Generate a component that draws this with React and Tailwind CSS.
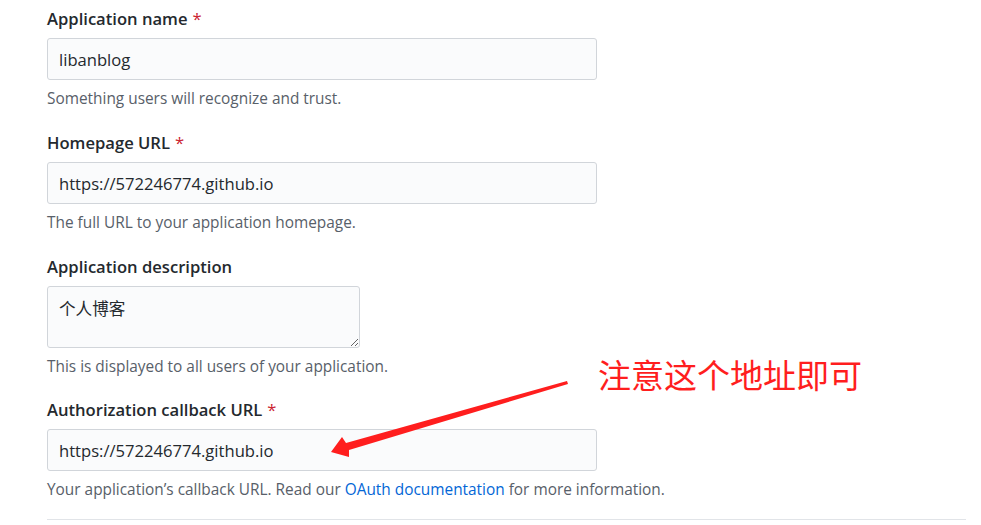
import React from 'react';

const fields = [
  { label: 'Application name', required: true, value: 'libanblog', help: 'Something users will recognize and trust.' },
  { label: 'Homepage URL', required: true, value: 'https://572246774.github.io', help: 'The full URL to your application homepage.' },
];

function Label({ children, required }) {
  return (
    <div className="h-[24px] leading-[24px] text-[16.6px] font-semibold text-[#24292e]">
      {children}
      {required && <span className="ml-[5px] font-normal text-[#cb2431]">*</span>}
    </div>
  );
}

function Help({ children }) {
  return <p className="mt-[9px] h-[20px] leading-[20px] text-[15.4px] text-[#586069]">{children}</p>;
}

function TextInput({ value }) {
  return (
    <input
      readOnly
      value={value}
      className="mt-[7px] block h-[42px] w-[550px] rounded-[3px] border border-[#d1d5da] bg-[#fafbfc] px-[11px] text-[16.6px] text-[#24292e] outline-none"
    />
  );
}

export default function App() {
  return (
    <main className="relative h-[525px] w-[981px] overflow-hidden bg-white font-['Open_Sans','Noto_Sans_CJK_SC',sans-serif]">
      <div className="flex flex-col pl-[47px] pt-[7px]">
        {fields.map((f, i) => (
          <div key={f.label} className={i > 0 ? 'mt-[22px]' : ''}>
            <Label required={f.required}>{f.label}</Label>
            <TextInput value={f.value} />
            <Help>{f.help}</Help>
          </div>
        ))}

        {/* description */}
        <div className="mt-[22px]">
          <Label>Application description</Label>
          <textarea
            readOnly
            defaultValue="个人博客"
            className="mt-[7px] block h-[62px] w-[313px] rounded-[3px] border border-[#d1d5da] bg-[#fafbfc] px-[11px] py-[11px] text-[16.6px] leading-[22px] text-[#24292e] outline-none"
          />
          <Help>This is displayed to all users of your application.</Help>
        </div>

        {/* callback */}
        <div className="mt-[21px]">
          <Label required>Authorization callback URL</Label>
          <TextInput value="https://572246774.github.io" />
          <Help>
            Your application’s callback URL. Read our{' '}
            <a className="text-[#0366d6]">OAuth documentation</a> for more information.
          </Help>
        </div>

        <div className="mt-[19px] h-px w-[919px] bg-[#e1e4e8]" />
      </div>

      {/* annotation */}
      <div className="absolute left-[598px] top-[353px] text-[33px] leading-[42px] text-[#ff1e1e] font-['Noto_Sans_CJK_SC',sans-serif]">
        注意这个地址即可
      </div>
      <svg className="absolute left-0 top-0 pointer-events-none" width="981" height="525" viewBox="0 0 981 525">
        <polygon
          points="331,452 342,437 346,443 567,381 568,384 349,450 349,457"
          fill="#ff1e1e"
        />
      </svg>
    </main>
  );
}
